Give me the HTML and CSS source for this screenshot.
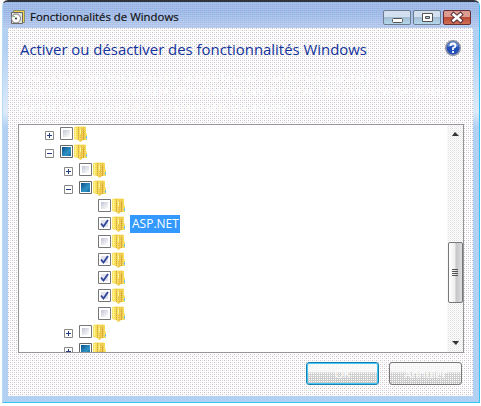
FILE: index.html
```html
<!DOCTYPE html>
<html lang="fr"><head><meta charset="utf-8"><title>Fonctionnalités de Windows</title><link rel="stylesheet" href="styles.css"></head>
<body>
<svg class="defs" width="0" height="0">
<defs>
<pattern id="grain" width="2" height="2" patternUnits="userSpaceOnUse"><rect width="1" height="1" fill="#fff" opacity=".25"/></pattern>
<linearGradient id="box" x2="1" y2="1"><stop stop-color="#bfc3d2"/><stop offset="1" stop-color="#fff"/></linearGradient>
<linearGradient id="blue" x2="1" y2="1"><stop stop-color="#0a4f8c"/><stop offset=".6" stop-color="#2f93c4"/><stop offset="1" stop-color="#1d6ea6"/></linearGradient>
</defs>
<symbol id="folder" viewBox="0 0 14 16"><path d="M0 1.500L2 .5H10L12 1v6l1 1v6H8l-2 2-2-2-4-1z" fill="#f7de54"/><path d="M6 2l5-1v12l-5 3z" fill="#edc544"/><path d="M4.500 1v13M9.500 4v10" stroke="#d9ab35" fill="none"/><path d="M1.500 2v10M6.500 3v5" stroke="#fff48e"/><path d="M12.500 10v3" stroke="#58b5e8"/><rect width="13" height="15" fill="url(#grain)"/></symbol>
<symbol id="off" viewBox="0 0 13 13"><path d="M.5.5h12v12H.5z" fill="#fff" stroke="#777"/><path d="M3 3h7v7H3z" fill="url(#box)"/><path d="M2 2h9v9H2z" fill="url(#grain)"/></symbol>
<symbol id="on" viewBox="0 0 13 13"><path d="M.5.5h12v12H.5z" fill="#fff" stroke="#777"/><path d="M3 3h7v7H3z" fill="#e1e2ed"/><path d="M3 6.500l2.500 3L10 3" fill="none" stroke="#31479c" stroke-width="1.900"/></symbol>
<symbol id="part" viewBox="0 0 13 13"><path d="M.5.5h12v12H.5z" fill="#fff" stroke="#666"/><path d="M2 2h9v9H2z" fill="url(#blue)"/></symbol>
<symbol id="plus" viewBox="0 0 9 9"><path d="M.5.5h8v8h-8z" fill="#fff" stroke="#888"/><path d="M2 4.500h5M4.500 2v5" stroke="#253b83"/></symbol>
<symbol id="minus" viewBox="0 0 9 9"><path d="M.5.5h8v8h-8z" fill="#fff" stroke="#888"/><path d="M2 4.500h5" stroke="#253b83"/></symbol>
</svg>
<main class="window">
<header class="titlebar">
<svg class="app" width="16" height="16" viewBox="0 0 16 16"><path d="M3.500 1.500h11v12h-11z" fill="#f3d646" stroke="#8c8b70"/><path d="M1.500 3.500h11v11h-11z" fill="#e4e4e4" stroke="#666"/><circle cx="6" cy="9.500" r="4.500" fill="#fff" stroke="#777"/><circle cx="6" cy="9.500" r="1" fill="#222"/><path d="M3 7l2 1" stroke="#58a652"/></svg>
<span class="caption">Fonctionnalités de Windows</span>
<div class="controls">
<svg class="ctl" width="28" height="15"><rect x="8.500" y="7.500" width="10" height="4" rx="1" fill="#fff" stroke="#555"/></svg>
<svg class="ctl" width="28" height="15"><path d="M8.500 2.500h10v8h-10z" fill="#fff" stroke="#555"/><path d="M11.500 5.500h4v2h-4z" fill="#a9c2dd" stroke="#555"/></svg>
<svg class="ctl close" width="28" height="15"><path d="M9.500 3.500l7 6M16.500 3.500l-7 6" stroke="#5c3038" stroke-width="4.500" stroke-linecap="square"/><path d="M9.500 3.500l7 6M16.500 3.500l-7 6" stroke="#fff" stroke-width="2.500" stroke-linecap="square"/></svg>
</div>
</header>
<section class="content">
<div class="heading"><h1>Activer ou désactiver des fonctionnalités Windows</h1>
<svg class="help" width="16" height="16" viewBox="0 0 16 16"><circle cx="8" cy="8" r="7.200" fill="#2350b8" stroke="#8c91a4" stroke-width="1.600"/><path d="M2.500 7a5.500 5 0 0 1 11 0q-5-2-11 0" fill="#6b8fd6"/><path d="M5.500 6Q5.500 3.500 8 3.500T10.500 6Q10.500 7.300 8 8v2M8 11v2" fill="none" stroke="#fff" stroke-width="1.800"/></svg></div>
<p class="intro"><span>Pour activer une fonctionnalité, activez la case à cocher correspondante. Pour</span><span>désactiver une fonctionnalité, désactivez sa case à cocher. Une case à cocher pleine</span><span>signifie qu'une partie de la fonctionnalité est activée.</span></p>
<div class="panel">
<div class="tree">
<div class="row l0"><svg class="exp"><use href="#plus"/></svg><svg class="check"><use href="#off"/></svg><svg class="folder"><use href="#folder"/></svg></div>
<div class="row l0"><svg class="exp"><use href="#minus"/></svg><svg class="check"><use href="#part"/></svg><svg class="folder"><use href="#folder"/></svg></div>
<div class="row l1"><svg class="exp"><use href="#plus"/></svg><svg class="check"><use href="#off"/></svg><svg class="folder"><use href="#folder"/></svg></div>
<div class="row l1"><svg class="exp"><use href="#minus"/></svg><svg class="check"><use href="#part"/></svg><svg class="folder"><use href="#folder"/></svg></div>
<div class="row l2"><svg class="check"><use href="#off"/></svg><svg class="folder"><use href="#folder"/></svg></div>
<div class="row l2"><svg class="check"><use href="#on"/></svg><svg class="folder"><use href="#folder"/></svg><span class="selected">ASP.NET</span></div>
<div class="row l2"><svg class="check"><use href="#off"/></svg><svg class="folder"><use href="#folder"/></svg></div>
<div class="row l2"><svg class="check"><use href="#on"/></svg><svg class="folder"><use href="#folder"/></svg></div>
<div class="row l2"><svg class="check"><use href="#on"/></svg><svg class="folder"><use href="#folder"/></svg></div>
<div class="row l2"><svg class="check"><use href="#on"/></svg><svg class="folder"><use href="#folder"/></svg></div>
<div class="row l2"><svg class="check"><use href="#off"/></svg><svg class="folder"><use href="#folder"/></svg></div>
<div class="row l1"><svg class="exp"><use href="#plus"/></svg><svg class="check"><use href="#off"/></svg><svg class="folder"><use href="#folder"/></svg></div>
<div class="row l1"><svg class="exp"><use href="#plus"/></svg><svg class="check"><use href="#part"/></svg><svg class="folder"><use href="#folder"/></svg></div>
</div>
<div class="scroll"><svg class="up" width="7" height="4"><path d="M0 4l3-4 4 4z" fill="#333"/></svg><div class="thumb"><i></i><i></i><i></i><i></i></div><svg class="down" width="7" height="4"><path d="M0 0h7L4 4z" fill="#333"/></svg></div>
</div>
<div class="actions"><button class="ok">OK</button><button>Annuler</button></div>
</section>
</main>
</body></html>
```
FILE: styles.css
```css
*{box-sizing:border-box}
body{margin:0;width:481px;height:406px;overflow:hidden;background:#fff;font-family:"Open Sans","Noto Sans",sans-serif;font-size:11px}
.defs{position:absolute}
.window{width:478px;height:403px;margin-left:2px;display:flex;flex-direction:column;border:1px solid #35c5f3;border-top:2px solid #30343b;border-left-color:#b5daf5;border-radius:6px 6px 0 0;padding:0 6px 6px 5px;background:linear-gradient(#fff0 45px,#ffffff90 110px,#fff0 125px),conic-gradient(#bfc9f4 25%,#a3d6ef 0 50%,#c2cbf6 0 75%,#a3d6ef 0) 0 0/2px 2px}
.titlebar{height:26px;flex:none;margin:0 -6px 0 -5px;padding:0 8px 0 7px;display:flex;align-items:center;background:linear-gradient(#fff0 40%,#ffffff40),conic-gradient(#8fb2e3 25%,#b5b9ea 0 50%,#9ccaee 0 75%,#a4b6e4 0) 0 0/2px 2px;border-radius:4px 4px 0 0}
.app{margin-top:4px}
.caption{margin:3px 0 0 4px;font-size:11.4px;line-height:15px;color:#111;white-space:nowrap;-webkit-text-stroke:.2px #111}
.controls{display:flex;gap:2px;margin:4px 0 0 auto}
.ctl{border:1px solid #6d7c90;border-radius:2px;background:linear-gradient(#d2e0ef 48%,#a4bdd5 50%,#b4d9eb)}
.close{border-color:#692d34;background:linear-gradient(#dc9b91 48%,#bc4a37 50%,#cf7157)}
.content{flex:1;min-height:0;padding:8px 11px 0 10px;display:flex;flex-direction:column;background:conic-gradient(at 1px 1px,#0000 75%,#c2c8c2 0) 0 0/4px 4px,conic-gradient(at 1px 1px,#0000 75%,#c2c8c2 0) 2px 2px/4px 4px,conic-gradient(at 1px 1px,#0000 75%,#eedcee 0) 2px 0/4px 4px,conic-gradient(at 1px 1px,#0000 75%,#eedcee 0) 0 2px/4px 4px,#fff}
.heading{height:30px;display:flex;justify-content:space-between;flex:none}
h1{margin:0 0 0 2px;font-size:14.9px;line-height:27px;font-weight:400;color:#12329a;white-space:nowrap}
.help{margin:4px 1px 0 0}
.intro{height:58px;flex:none;margin:0;padding:3px 0 0 2px;color:#fff;line-height:15px;font-size:11px}
.intro span{display:block;white-space:nowrap}
.panel{height:229px;flex:none;width:446px;display:flex;border:1px solid #989398;background:#fff}
.tree{flex:1;overflow:hidden}
.row{height:18px;display:flex;align-items:center}
.l0{padding-left:26px}.l1{padding-left:45px}.l2{padding-left:79px}
.exp{width:9px;height:9px;margin:3px 6px 0 0}
.check{width:13px;height:13px;margin-bottom:1px}
.folder{width:14px;height:16px;margin-left:1px}
.selected{margin-left:4px;background:#3399ff;color:#fff;width:50px;height:18px;line-height:17px;padding-left:2px;font-size:12px;white-space:nowrap}
.scroll{width:16px;display:flex;flex-direction:column;align-items:center;background:conic-gradient(#fff 25%,#dedede 0 50%,#fff 0 75%,#f1f1f1 0) 0 0/2px 2px}
.up{margin-top:7px}
.thumb{width:15px;height:61px;margin-top:106px;border:1px solid #777;border-radius:2px;background:linear-gradient(90deg,#fff,#eee 45%,#c5c5ca 55%,#ddd);display:flex;flex-direction:column;align-items:center;justify-content:center;gap:1px}
.thumb i{width:6px;height:1px;background:#555}
.down{margin-top:38px}
.actions{display:flex;gap:10px;justify-content:flex-end;margin:9px 0 0}
button{width:73px;height:23px;padding:0;border:1px solid #777;border-radius:3px;font:11.5px "Open Sans",sans-serif;color:#fff;background:conic-gradient(#fff0 75%,#fff 0) 0 0/2px 2px,linear-gradient(#f5f5f5 40%,#d2d2d2 50%,#c7c7c7)}
.ok{border-color:#167cae;box-shadow:inset 0 0 0 1px #43c9f3}
```
